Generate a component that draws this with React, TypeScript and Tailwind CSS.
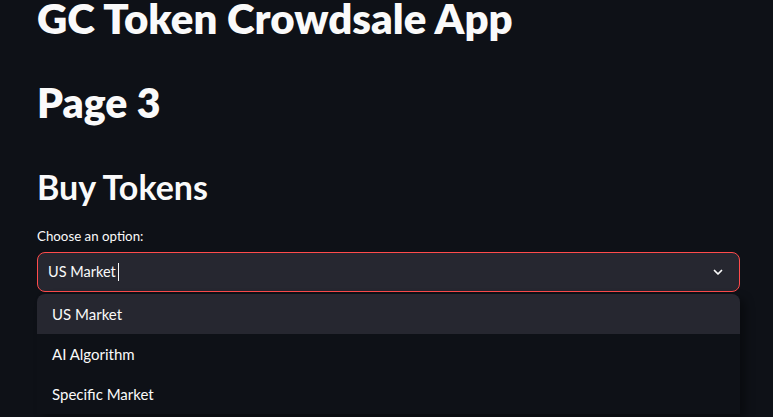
import React, { useState } from 'react';

const options = ['US Market', 'AI Algorithm', 'Specific Market'];

const App: React.FC = () => {
  const [selected] = useState('US Market');

  return (
    <div
      className="w-full h-[417px] overflow-hidden bg-[#0e1117] text-[#fafafa]"
      style={{ fontFamily: 'Lato, "Noto Sans", sans-serif' }}
    >
      <div className="pl-[37px] w-[740px]">
        {/* 标题 */}
        <h1 className="h-[36px] text-[42px] leading-[36px] font-extrabold whitespace-nowrap">
          GC Token Crowdsale App
        </h1>
        <h1 className="mt-[48px] h-[38px] text-[41px] leading-[38px] font-extrabold">Page 3</h1>
        <h2 className="mt-[49px] h-[32px] text-[34px] leading-[32px] font-bold">Buy Tokens</h2>

        {/* 选择框 */}
        <label className="block mt-[23px] h-[20px] text-[13.3px] leading-[20px]">Choose an option:</label>
        <div className="mt-[6px] relative">
          <div className="flex items-center h-[40px] rounded-lg border border-[#ff4b4b] bg-[#262730] pl-[10px] pr-[15px]">
            <span className="text-[14.5px] leading-[20px]">{selected}</span>
            <span className="ml-[2px] w-px h-[18px] bg-[#fafafa]" />
            <div className="flex-1" />
            <svg className="w-[12px] h-[12px]" viewBox="0 0 24 24" fill="none" stroke="#fafafa" strokeWidth={3.5} strokeLinecap="round" strokeLinejoin="round">
              <path d="M5 9l7 7 7-7" />
            </svg>
          </div>

          {/* 下拉菜单 */}
          <div className="absolute left-0 right-0 top-[42px] rounded-t-lg overflow-hidden bg-[#0e1117] shadow-[6px_4px_8px_rgba(0,0,0,0.35)]">
            {options.map((opt) => (
              <div
                key={opt}
                className={`flex items-center h-[40px] pl-[15px] text-[15px] ${
                  opt === selected ? 'bg-[#262730]' : 'bg-[#0e1117]'
                }`}
              >
                {opt}
              </div>
            ))}
          </div>
        </div>
      </div>
    </div>
  );
};

export default App;
